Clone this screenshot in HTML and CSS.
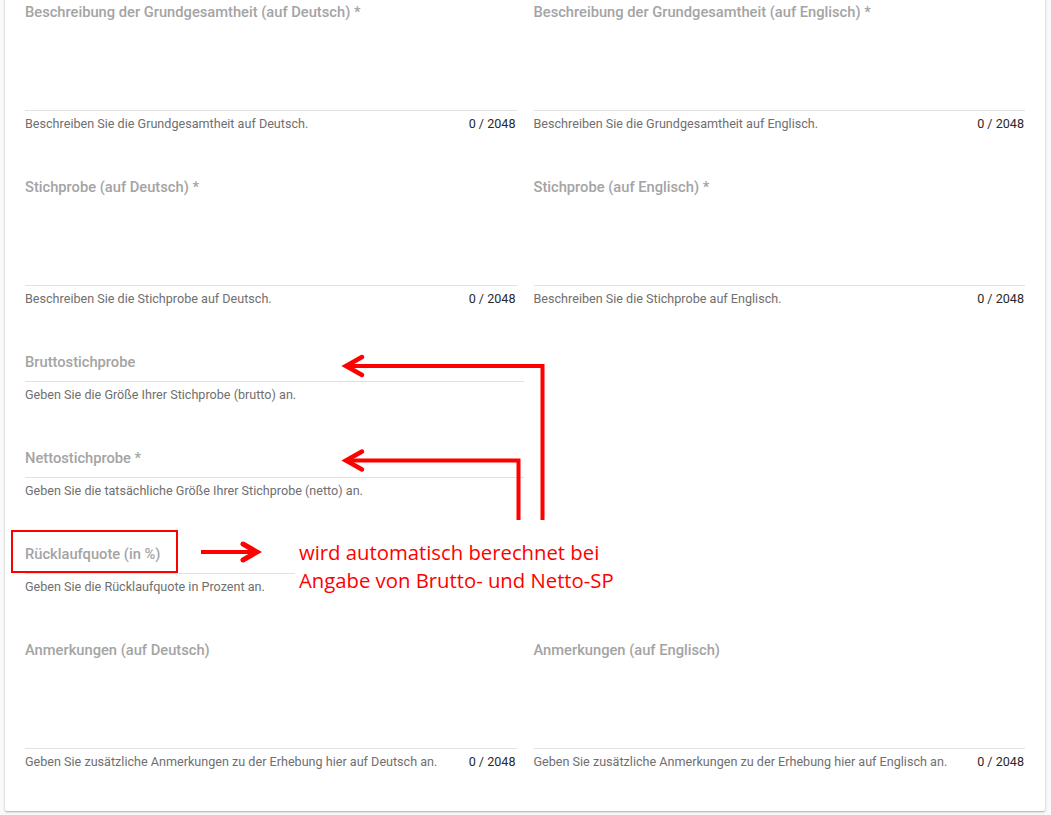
FILE: index.html
```html
<!DOCTYPE html>
<html lang="de">
<head>
<meta charset="utf-8">
<title>Erhebung</title>
<link rel="stylesheet" href="styles.css">
</head>
<body>
<div class="page">
  <div class="card">
    <div class="row-2">
      <div class="field area">
        <div class="label">Beschreibung der Grundgesamtheit (auf Deutsch) *</div>
        <div class="hint"><span>Beschreiben Sie die Grundgesamtheit auf Deutsch.</span><span class="count">0 / 2048</span></div>
      </div>
      <div class="field area">
        <div class="label">Beschreibung der Grundgesamtheit (auf Englisch) *</div>
        <div class="hint"><span>Beschreiben Sie die Grundgesamtheit auf Englisch.</span><span class="count">0 / 2048</span></div>
      </div>
    </div>
    <div class="row-2">
      <div class="field area">
        <div class="label">Stichprobe (auf Deutsch) *</div>
        <div class="hint"><span>Beschreiben Sie die Stichprobe auf Deutsch.</span><span class="count">0 / 2048</span></div>
      </div>
      <div class="field area">
        <div class="label">Stichprobe (auf Englisch) *</div>
        <div class="hint"><span>Beschreiben Sie die Stichprobe auf Englisch.</span><span class="count">0 / 2048</span></div>
      </div>
    </div>
    <div class="row-1">
      <div class="field single">
        <div class="label">Bruttostichprobe</div>
        <div class="hint"><span>Geben Sie die Größe Ihrer Stichprobe (brutto) an.</span></div>
      </div>
    </div>
    <div class="row-1">
      <div class="field single">
        <div class="label">Nettostichprobe *</div>
        <div class="hint"><span>Geben Sie die tatsächliche Größe Ihrer Stichprobe (netto) an.</span></div>
      </div>
    </div>
    <div class="row-1">
      <div class="field single">
        <div class="label">Rücklaufquote (in %)</div>
        <div class="hint"><span>Geben Sie die Rücklaufquote in Prozent an.</span></div>
      </div>
    </div>
    <div class="row-2">
      <div class="field area">
        <div class="label">Anmerkungen (auf Deutsch)</div>
        <div class="hint"><span>Geben Sie zusätzliche Anmerkungen zu der Erhebung hier auf Deutsch an.</span><span class="count">0 / 2048</span></div>
      </div>
      <div class="field area">
        <div class="label">Anmerkungen (auf Englisch)</div>
        <div class="hint"><span>Geben Sie zusätzliche Anmerkungen zu der Erhebung hier auf Englisch an.</span><span class="count">0 / 2048</span></div>
      </div>
    </div>
  </div>

  <svg class="arrows" width="1051" height="815" viewBox="0 0 1051 815">
    <g fill="none" stroke="#ff0000" stroke-width="4">
      <path d="M542.5 520 V366 H347"/>
      <path d="M518.5 520 V460.5 H347"/>
      <path d="M201 552 H254"/>
    </g>
    <g fill="none" stroke="#ff0000" stroke-width="4.5" stroke-linecap="round" stroke-linejoin="miter">
      <polyline points="362,357 346,366 362,375"/>
      <polyline points="362,451.5 346,460.5 362,469.5"/>
    </g>
    <g fill="none" stroke="#ff0000" stroke-width="5" stroke-linecap="round">
      <polyline points="243,544 257,552 243,560"/>
    </g>
  </svg>
  <div class="mark-box"></div>
  <div class="note">wird automatisch berechnet bei<br>Angabe von Brutto- und Netto-SP</div>
</div>
</body>
</html>
```

FILE: styles.css
```css
html, body {
  margin: 0;
  padding: 0;
  background: #fafafa;
}
body {
  font-family: Roboto, "Liberation Sans", sans-serif;
  width: 1051px;
  height: 815px;
  overflow: hidden;
}
.page {
  position: relative;
  display: flow-root;
  width: 1051px;
  height: 815px;
}
.card {
  margin: -6px 6px 0 5px;
  background: #ffffff;
  box-shadow: 0 1px 3px rgba(0,0,0,0.22), 0 1px 1px rgba(0,0,0,0.12);
  border-radius: 0 0 2px 2px;
  padding: 9px 20px 41px 20px;
  display: flex;
  flex-direction: column;
  gap: 46px;
}
.row-2 {
  display: grid;
  grid-template-columns: 1fr 1fr;
  column-gap: 17px;
}
.row-1 {
  width: 499px;
}
.field {
  display: flex;
  flex-direction: column;
}
.label {
  font-size: 14.7px;
  font-weight: 500;
  line-height: 18px;
  color: #a4a4a4;
  border-bottom: 1px solid #e2e2e2;
}
.field.area .label {
  padding-bottom: 89px;
}
.field.single .label {
  padding-bottom: 10px;
}
.hint {
  display: flex;
  justify-content: space-between;
  margin-top: 5px;
  padding-right: 1px;
  font-size: 12.6px;
  line-height: 16px;
  color: #6f6f6f;
}
.count {
  color: #2a2a2a;
}
.arrows {
  position: absolute;
  left: 0;
  top: 0;
  pointer-events: none;
}
.mark-box {
  position: absolute;
  left: 11px;
  top: 530px;
  width: 163px;
  height: 39px;
  border: 2px solid #ff0000;
}
.note {
  position: absolute;
  left: 295px;
  top: 538px;
  padding: 0 8px 2px 4px;
  background: #ffffff;
  font-family: "Open Sans", "Liberation Sans", sans-serif;
  font-size: 20.3px;
  line-height: 28px;
  color: #ff0000;
}
```
